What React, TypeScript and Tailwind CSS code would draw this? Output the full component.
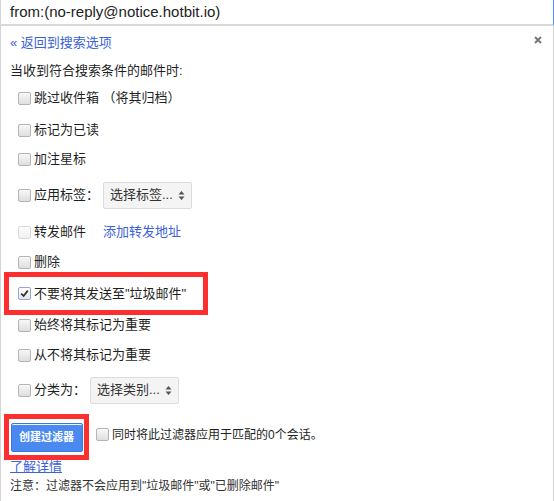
import React from "react"

const font = { fontFamily: '"Liberation Sans", Arial, "Noto Sans CJK SC", sans-serif' }

function Box({ checked = false, disabled = false }: { checked?: boolean; disabled?: boolean }) {
  return (
    <span
      className={
        "inline-flex items-center justify-center w-[13px] h-[13px] rounded-[2px] border shrink-0 " +
        (checked
          ? "border-[#8fa6d6] bg-gradient-to-b from-[#ffffff] to-[#e4e4e4]"
          : disabled
          ? "border-[#dadada] bg-gradient-to-b from-[#fcfcfc] to-[#f0f0f0]"
          : "border-[#b4b4b4] bg-gradient-to-b from-[#f8f8f8] to-[#dedede]")
      }
    >
      {checked && (
        <svg width="9" height="9" viewBox="0 0 9 9">
          <path d="M1.2 4.6 L3.6 7 L7.8 1.6" fill="none" stroke="#333" strokeWidth="1.8" />
        </svg>
      )}
    </span>
  )
}

function Select({ label }: { label: string }) {
  return (
    <div className="flex items-center h-[27px] px-[6px] gap-[5px] border border-[#dcdcdc] rounded-[2px] bg-[#f4f4f4] text-[13px] text-[#333]">
      <span>{label}</span>
      <svg width="7" height="11" viewBox="0 0 7 11">
        <path d="M0.5 4.5 L3.5 1 L6.5 4.5 Z M0.5 6.5 L3.5 10 L6.5 6.5 Z" fill="#555" />
      </svg>
    </div>
  )
}

function Row({ children, className = "" }: { children: React.ReactNode; className?: string }) {
  return <div className={"flex items-center gap-[3px] pl-[17px] h-[20px] text-[13px] " + className}>{children}</div>
}

export default function App() {
  return (
    <div className="w-[554px] h-[501px] bg-white text-[#1f1f1f] overflow-hidden" style={font}>
      {/* search input */}
      <div className="h-[26px] flex items-center pl-[9px] border-b-2 border-[#d9d9d9] border-l border-l-[#d3d3d3] border-r border-r-[#4d90fe] text-[15px] text-[#222]">
        from:(no-reply@notice.hotbit.io)
      </div>

      <div className="h-[475px] border-l border-r border-[#d3d3d3] flex flex-col">
        <div className="flex justify-between mt-[7px] h-[20px] pl-[9px] pr-[11px]">
          <a className="text-[13px] text-[#3b62d6] self-center">« 返回到搜索选项</a>
          <svg width="8" height="8" viewBox="0 0 8 8" className="mt-[3px]">
            <path d="M1 1 L7 7 M7 1 L1 7" stroke="#777" strokeWidth="2" />
          </svg>
        </div>

        <div className="mt-[8px] h-[20px] flex items-center pl-[9px] text-[13px]">当收到符合搜索条件的邮件时:</div>

        <Row className="mt-[7px]">
          <Box />
          <span>跳过收件箱 （将其归档）</span>
        </Row>
        <Row className="mt-[12px]">
          <Box />
          <span>标记为已读</span>
        </Row>
        <Row className="mt-[9px]">
          <Box />
          <span>加注星标</span>
        </Row>
        <div className="mt-[12px] h-[28px] flex items-center pl-[17px] text-[13px]">
          <Box />
          <span className="ml-[3px] w-[69px]">应用标签：</span>
          <Select label="选择标签..." />
        </div>
        <Row className="mt-[13px]">
          <Box disabled />
          <span>转发邮件</span>
          <a className="ml-[14px] text-[#3b62d6]">添加转发地址</a>
        </Row>
        <Row className="mt-[10px]">
          <Box />
          <span>删除</span>
        </Row>

        <div className="ml-[3px] w-[204px] h-[43px] border-[5px] border-[#fd2e2e] flex items-center gap-[3px] pl-[9px] text-[13px]">
          <Box checked />
          <span>不要将其发送至"垃圾邮件"</span>
        </div>

        <Row>
          <Box />
          <span>始终将其标记为重要</span>
        </Row>
        <Row className="mt-[10px]">
          <Box />
          <span>从不将其标记为重要</span>
        </Row>
        <div className="mt-[11px] h-[28px] flex items-center pl-[17px] text-[13px]">
          <Box />
          <span className="ml-[3px] w-[56px]">分类为：</span>
          <Select label="选择类别..." />
        </div>

        <div className="mt-[10px] flex items-center">
          <div className="ml-[3px] w-[85px] h-[46px] border-[5px] border-[#fd2e2e] flex items-center justify-center">
            <button className="w-[72px] h-[29px] bg-[#4a8af0] border border-[#3a78e0] rounded-[2px] text-white text-[11px] font-bold shadow-[inset_0_1px_0_rgba(255,255,255,0.9)]">
              创建过滤器
            </button>
          </div>
          <div className="ml-[7px] flex items-center gap-[3px] text-[12px] -mt-[5px]">
            <Box />
            <span>同时将此过滤器应用于匹配的0个会话。</span>
          </div>
        </div>

        <div className="h-[14px] flex items-center pl-[9px] text-[13px]">
          <a className="text-[#3b62d6] underline">了解详情</a>
        </div>
        <div className="mt-[4px] h-[16px] flex items-center pl-[9px] text-[12px] text-[#333]">
          注意：过滤器不会应用到"垃圾邮件"或"已删除邮件"
        </div>
      </div>
    </div>
  )
}
